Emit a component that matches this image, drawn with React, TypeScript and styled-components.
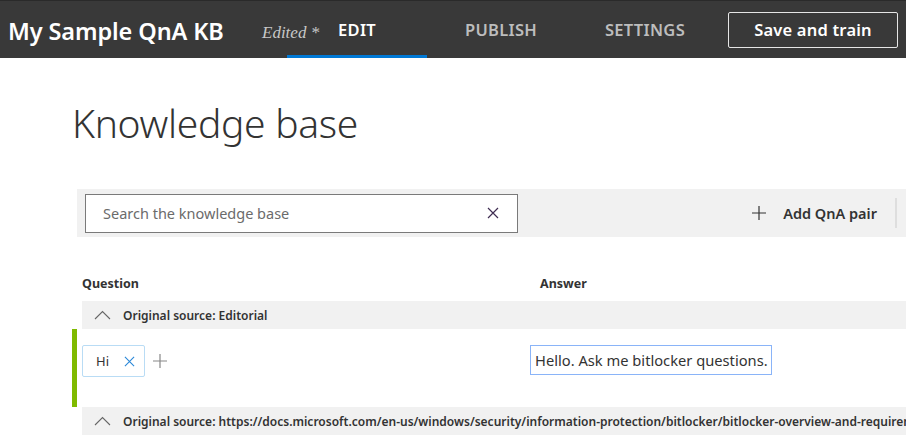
import React from "react";
import styled, { createGlobalStyle } from "styled-components";

const Global = createGlobalStyle`
  html, body { margin: 0; padding: 0; background: #fff; }
  body { font-family: "Noto Sans", "Open Sans", sans-serif; color: #333; overflow: hidden; }
  * { box-sizing: border-box; }
`;

const Header = styled.header`
  height: 58px;
  background: #393939;
  border-top: 1px solid #2a2a2a;
  display: flex;
  align-items: center;
  padding-left: 8px;
  padding-right: 8px;
`;

const Title = styled.div`
  font-size: 23.5px;
  font-weight: 600;
  color: #fff;
  letter-spacing: -0.1px;
  white-space: nowrap;
  margin-top: 2px;
  width: 254px;
`;

const Edited = styled.div`
  font-family: "Liberation Serif", serif;
  font-style: italic;
  font-size: 17px;
  color: #c8c8c8;
  margin-top: 6px;
  width: 23px;
  white-space: nowrap;
  position: relative;
  z-index: 1;
`;

const Tabs = styled.nav`
  display: flex;
  align-self: stretch;
`;

const Tab = styled.div<{ $active?: boolean }>`
  width: 140px;
  margin: 0 2px;
  display: flex;
  align-items: center;
  justify-content: center;
  font-size: 16.5px;
  font-weight: 600;
  letter-spacing: 0.3px;
  color: ${(p) => (p.$active ? "#fff" : "#bdbdbd")};
  border-bottom: 3px solid ${(p) => (p.$active ? "#0078d4" : "transparent")};
  padding-top: 3px;
`;

const SaveButton = styled.button`
  margin-left: auto;
  width: 170px;
  height: 36px;
  background: transparent;
  border: 1px solid #e6e6e6;
  border-radius: 2px;
  color: #fff;
  font-family: inherit;
  font-size: 16.5px;
  font-weight: 600;
  letter-spacing: 0.2px;
`;

const Main = styled.main`
  padding-left: 72px;
`;

const PageTitle = styled.h1`
  margin: 0;
  padding-top: 40px;
  font-size: 39px;
  font-weight: 300;
  color: #333;
  line-height: 50px;
  letter-spacing: -0.3px;
`;

const Toolbar = styled.div`
  margin-top: 41px;
  margin-left: 5px;
  height: 48px;
  background: #f1f1f1;
  display: flex;
  align-items: center;
  padding-left: 8px;
`;

const SearchBox = styled.div`
  width: 433px;
  height: 39px;
  background: #fff;
  border: 1px solid #7a7a7a;
  display: flex;
  align-items: center;
  padding: 0 18px 0 17px;
  font-size: 14.5px;
  color: #6b6b6b;
`;

const SearchText = styled.span`
  flex: 1;
`;

const AddButton = styled.div`
  margin-left: auto;
  display: flex;
  align-items: center;
  gap: 17px;
  font-size: 14.5px;
  font-weight: 600;
  color: #333;
  padding-right: 18px;
  border-right: 2px solid #dedede;
  height: 30px;
  margin-right: 9px;
`;

const Columns = styled.div`
  display: grid;
  grid-template-columns: 458px 1fr;
  padding-left: 10px;
  margin-top: 38px;
  font-size: 12.5px;
  font-weight: 700;
  color: #333;
  height: 26px;
`;

const GroupHeader = styled.div`
  margin-left: 10px;
  height: 28px;
  background: #f1f1f1;
  display: flex;
  align-items: center;
  gap: 12px;
  padding-left: 12px;
  font-size: 12px;
  font-weight: 600;
  color: #333;
  white-space: nowrap;
  overflow: hidden;
`;

const GroupText = styled.span`
  flex: 0 0 auto;
`;

const ChevronBox = styled.span`
  flex: 0 0 auto;
  display: flex;
  align-items: center;
`;

const Row = styled.div`
  height: 78px;
  border-left: 5px solid #7fba00;
  display: grid;
  grid-template-columns: 448px 1fr;
  align-items: start;
  padding-left: 5px;
  padding-top: 16px;
`;

const QuestionCell = styled.div`
  display: flex;
  align-items: center;
  gap: 8px;
`;

const Chip = styled.div`
  height: 32px;
  width: 63px;
  border: 1px solid #b9dcf5;
  border-radius: 2px;
  display: flex;
  align-items: center;
  justify-content: space-between;
  padding: 0 9px 0 13px;
  font-size: 13px;
  color: #333;
`;

const AnswerBox = styled.div`
  width: 242px;
  height: 30px;
  border: 1px solid #8ab4f8;
  display: flex;
  align-items: center;
  padding-left: 4px;
  font-size: 14.7px;
  color: #333;
  white-space: nowrap;
`;

const Chevron = () => (
  <ChevronBox>
    <svg width="17" height="10" viewBox="0 0 17 10">
      <path d="M1 9 L8.5 1.5 L16 9" fill="none" stroke="#666" strokeWidth="1.1" />
    </svg>
  </ChevronBox>
);

const Cross = ({ color, size }: { color: string; size: number }) => (
  <svg width={size} height={size} viewBox="0 0 12 12">
    <path d="M1 1 L11 11 M11 1 L1 11" stroke={color} strokeWidth="1.2" fill="none" />
  </svg>
);

const Plus = ({ color, size }: { color: string; size: number }) => (
  <svg width={size} height={size} viewBox="0 0 14 14">
    <path d="M7 0 V14 M0 7 H14" stroke={color} strokeWidth="1.2" fill="none" />
  </svg>
);

export default function App() {
  return (
    <>
      <Global />
      <Header>
        <Title>My Sample QnA KB</Title>
        <Edited>Edited *</Edited>
        <Tabs>
          <Tab $active>EDIT</Tab>
          <Tab>PUBLISH</Tab>
          <Tab>SETTINGS</Tab>
        </Tabs>
        <SaveButton>Save and train</SaveButton>
      </Header>
      <Main>
        <PageTitle>Knowledge base</PageTitle>
        <Toolbar>
          <SearchBox>
            <SearchText>Search the knowledge base</SearchText>
            <Cross color="#3f2d52" size={12} />
          </SearchBox>
          <AddButton>
            <Plus color="#333" size={14} />
            <span>Add QnA pair</span>
          </AddButton>
        </Toolbar>
        <Columns>
          <span>Question</span>
          <span>Answer</span>
        </Columns>
        <GroupHeader>
          <Chevron />
          <GroupText>Original source: Editorial</GroupText>
        </GroupHeader>
        <Row>
          <QuestionCell>
            <Chip>
              <span>Hi</span>
              <Cross color="#2b88d8" size={11} />
            </Chip>
            <Plus color="#888" size={14} />
          </QuestionCell>
          <AnswerBox>Hello. Ask me bitlocker questions.</AnswerBox>
        </Row>
        <GroupHeader>
          <Chevron />
          <GroupText>
            Original source: https://docs.microsoft.com/en-us/windows/security/information-protection/bitlocker/bitlocker-overview-and-requirements-faq
          </GroupText>
        </GroupHeader>
      </Main>
    </>
  );
}
